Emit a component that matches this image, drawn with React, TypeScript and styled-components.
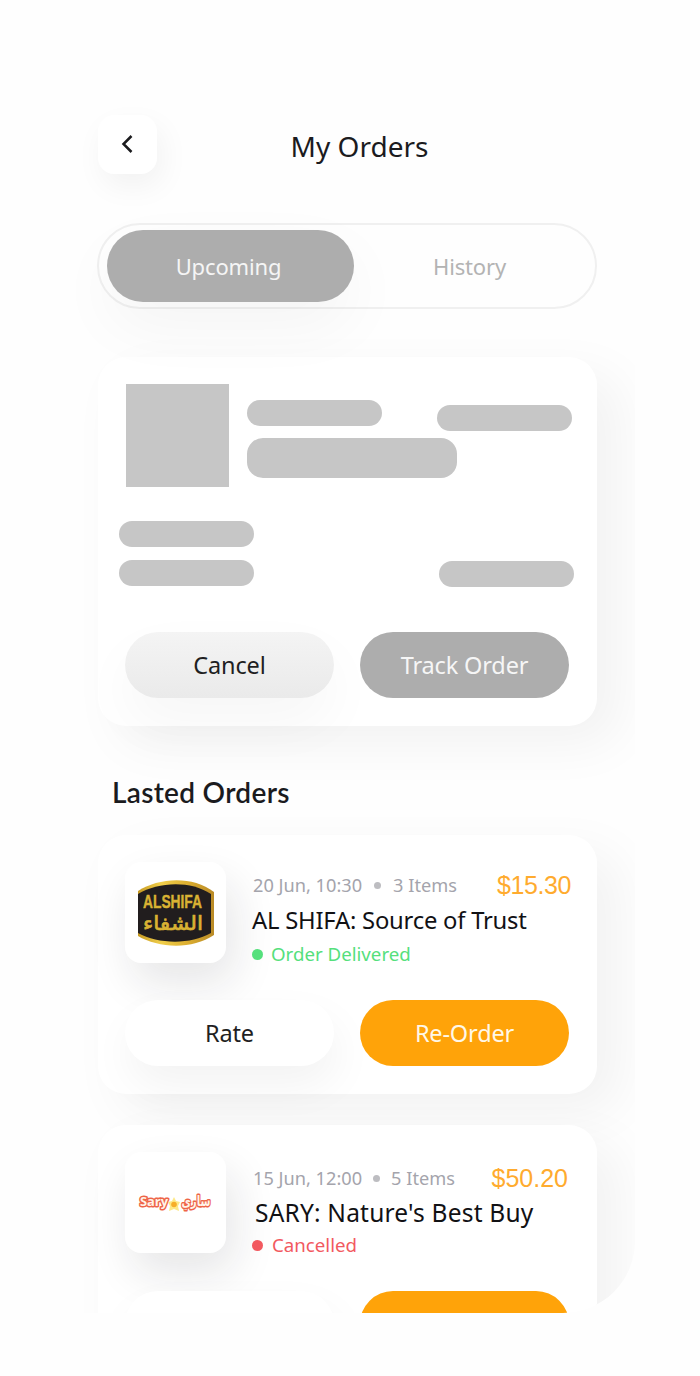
import React from "react";
import styled, { createGlobalStyle } from "styled-components";

const GlobalStyle = createGlobalStyle`
  *, *::before, *::after { box-sizing: border-box; }
  body { margin: 0; background: #fefefe; font-family: "Noto Sans", sans-serif; color: #1b1b1e; }
  button { font-family: inherit; border: 0; margin: 0; padding: 0; }
  svg { overflow: visible; }
`;

const Page = styled.div`
  height: 1376px;
  padding-left: 59px;
  background: #fefefe;
`;

const Phone = styled.main`
  width: 576px;
  height: 1313px;
  padding: 115px 38px 0 39px;
  overflow: hidden;
  border-radius: 0 0 72px 0;
  background: #fefefe;
`;

const Header = styled.header`
  display: grid;
  grid-template-columns: 59px 1fr 55px;
  align-items: center;
  height: 59px;
`;

const BackButton = styled.button`
  display: grid;
  place-items: center;
  width: 59px;
  height: 59px;
  padding: 0 2px 2px 0;
  border-radius: 16px;
  background: #fff;
  box-shadow: 5px 12px 30px rgba(0, 0, 0, 0.05);
`;

const Title = styled.h1`
  margin: 2px 0 0;
  font-size: 28px;
  line-height: 38px;
  font-weight: 400;
  text-align: center;
  padding-left: 20px;
`;

const Tabs = styled.div`
  display: flex;
  height: 86px;
  margin: 49px 0 48px -1px;
  padding: 5px 6px 4px 8px;
  border: 2px solid #f0f0f0;
  border-radius: 43px;
`;

const Tab = styled.button<{ $active?: boolean }>`
  flex: ${(p) => (p.$active ? "0 0 247px" : "1")};
  height: 72px;
  padding: 0 4px 0 0;
  border-radius: 36px;
  font-size: 22px;
  line-height: 30px;
  letter-spacing: -0.15px;
  color: ${(p) => (p.$active ? "#f5f5f5" : "#b3b3b3")};
  background: ${(p) => (p.$active ? "#adadad" : "transparent")};
  box-shadow: ${(p) => (p.$active ? "0 24px 64px rgba(0, 0, 0, 0.045)" : "none")};
`;

const Card = styled.section<{ $height: number }>`
  height: ${(p) => p.$height}px;
  padding: 27px 28px 0 27px;
  border-radius: 28px;
  background: #fff;
  box-shadow: 22px 18px 52px rgba(0, 0, 0, 0.05);
`;

const CurrentCard = styled(Card)`
  display: flex;
  flex-direction: column;
`;

const SkeletonTop = styled.div`
  display: grid;
  grid-template-columns: 103px 210px 1fr;
  column-gap: 18px;
  height: 103px;
  margin-left: 1px;
`;

const SkeletonLines = styled.div`
  display: flex;
  flex-direction: column;
  gap: 12px;
  padding-top: 16px;
`;

const SkeletonPrice = styled.div`
  margin: 21px 0 0 -38px;
`;

const SkeletonBottom = styled.div`
  display: flex;
  justify-content: space-between;
  align-items: flex-end;
  margin: 34px -5px 0 -6px;
  height: 66px;
`;

const SkeletonStack = styled.div`
  display: grid;
  gap: 13px;
  padding-bottom: 1px;
`;

const Bone = styled.div<{ $w: number; $h: number; $r: number }>`
  width: ${(p) => p.$w}px;
  height: ${(p) => p.$h}px;
  border-radius: ${(p) => p.$r}px;
  background: #c6c6c6;
`;

const Actions = styled.div<{ $top: number }>`
  display: grid;
  grid-template-columns: 209px 209px;
  justify-content: space-between;
  margin-top: ${(p) => p.$top}px;
`;

const tones = {
  muted: "color:#1f1f22;background:linear-gradient(#f4f4f4,#eaeaea);box-shadow:0 24px 56px rgba(0,0,0,.04);",
  gray: "color:#f6f6f6;background:#adadad;",
  plain: "color:#1f1f22;background:#fff;box-shadow:4px 20px 44px rgba(0,0,0,.05);",
  orange: "color:#fff8e8;background:#ffa309;",
};

const Action = styled.button<{ $tone: keyof typeof tones }>`
  height: 66px;
  padding-top: 1px;
  border-radius: 33px;
  font-size: 23.5px;
  line-height: 33px;
  letter-spacing: -0.15px;
  ${(p) => tones[p.$tone]}
`;

const SectionTitle = styled.h2`
  margin: 47px 0 24px 14px;
  font-family: Lato, sans-serif;
  font-size: 28px;
  line-height: 38px;
  font-weight: 600;
  letter-spacing: 0.3px;
`;

const OrderList = styled.div`
  display: grid;
  gap: 31px;
`;

const OrderTop = styled.div`
  display: flex;
  height: 101px;
`;

const LogoTile = styled.div`
  flex: none;
  display: grid;
  place-items: center;
  width: 101px;
  height: 101px;
  border-radius: 16px;
  background: #fff;
  box-shadow: 8px 20px 44px rgba(30, 30, 40, 0.11);
`;

const Info = styled.div<{ $shift: number }>`
  flex: 1;
  display: flex;
  flex-direction: column;
  min-width: 0;
  padding-left: 26px;
  padding-top: ${(p) => 8 + p.$shift}px;
`;

const MetaRow = styled.div`
  display: flex;
  justify-content: space-between;
  align-items: center;
  height: 32px;
  white-space: nowrap;
`;

const Meta = styled.div<{ $gap: number }>`
  display: flex;
  align-items: center;
  gap: ${(p) => p.$gap}px;
  padding-left: 1px;
  font-size: 18.2px;
  color: #a4a4ac;
`;

const Dot = styled.span<{ $size: number }>`
  width: ${(p) => p.$size}px;
  height: ${(p) => p.$size}px;
  border-radius: 50%;
  background: currentColor;
`;

const MetaDot = styled(Dot)`
  background: #bdbdc1;
`;

const Price = styled.div<{ $inset: number; $tracking: number }>`
  margin-right: ${(p) => p.$inset}px;
  padding-top: 1px;
  font-family: "Liberation Sans", Arial, sans-serif;
  font-size: 25px;
  letter-spacing: ${(p) => p.$tracking}px;
  color: #ffab2e;
`;

const OrderName = styled.h3<{ $indent: number; $size: number; $tracking: number }>`
  margin: 3px 0 0 ${(p) => p.$indent}px;
  font-size: ${(p) => p.$size}px;
  line-height: 34px;
  font-weight: 400;
  letter-spacing: ${(p) => p.$tracking}px;
  white-space: nowrap;
  color: #111114;
`;

const Status = styled.div<{ $color: string; $gap: number; $up: number }>`
  display: flex;
  align-items: center;
  gap: ${(p) => p.$gap}px;
  margin-top: ${(p) => 3 - p.$up}px;
  font-size: 18.7px;
  line-height: 28px;
  color: ${(p) => p.$color};
`;

const AlShifaLogo = () => (
  <svg width="76" height="66" viewBox="0 0 76 66">
    <defs>
      <linearGradient id="gold" x1="0" x2="1">
        <stop offset="0" stopColor="#c79a22" />
        <stop offset="0.3" stopColor="#f1cf4b" />
        <stop offset="0.65" stopColor="#dcae30" />
        <stop offset="1" stopColor="#b98a26" />
      </linearGradient>
    </defs>
    <path d="M0 11C20-2 54-5 76 12V55C54 70 20 68 0 56Z" fill="url(#gold)" />
    <path d="M0 14C20 2 52 0 73 14V53C52 65 20 64 0 53Z" fill="#211d1e" />
    <text x="5" y="28" textLength="59" lengthAdjust="spacingAndGlyphs" fill="#d9b233" stroke="#d9b233" strokeWidth="0.4" fontFamily="Liberation Sans, sans-serif" fontWeight="700" fontSize="18">ALSHIFA</text>
    <text x="35" y="50" textAnchor="middle" textLength="60" lengthAdjust="spacingAndGlyphs" fill="#d9b233" stroke="#d9b233" strokeWidth="0.7" fontFamily="DejaVu Sans, sans-serif" fontSize="20">الشفاء</text>
  </svg>
);

const SaryLogo = () => (
  <svg width="74" height="22" viewBox="0 0 74 22">
    <g fill="#fff3e8" stroke="#ee6548" strokeWidth="3" paintOrder="stroke" strokeLinejoin="round" fontWeight="700">
      <text x="1" y="14" textLength="28" lengthAdjust="spacingAndGlyphs" fontFamily="Open Sans, sans-serif" fontSize="13">Sary</text>
      <text x="57" y="14" textAnchor="middle" textLength="29" lengthAdjust="spacingAndGlyphs" fontFamily="DejaVu Sans, sans-serif" fontSize="14">ساري</text>
    </g>
    <path d="M35 5l2 4 4 1-2 4 1 5-5-2-5 2 1-5-2-4 4-1Z" fill="#fde987" />
    <circle cx="35" cy="12.5" r="2.8" fill="#f6ae29" />
  </svg>
);

interface Order {
  date: string;
  items: string;
  price: string;
  priceInset: number;
  priceTracking: number;
  name: string;
  nameSize: number;
  tracking: number;
  status: string;
  color: string;
  late: boolean;
  logo: React.ReactNode;
}

const orders: Order[] = [
  { date: "20 Jun, 10:30", items: "3 Items", price: "$15.30", priceInset: -2, priceTracking: -0.4, name: "AL SHIFA: Source of Trust", nameSize: 23.8, tracking: -0.22, status: "Order Delivered", color: "#55e07c", late: false, logo: <AlShifaLogo /> },
  { date: "15 Jun, 12:00", items: "5 Items", price: "$50.20", priceInset: 1, priceTracking: 0, name: "SARY: Nature's Best Buy", nameSize: 24.5, tracking: 0.2, status: "Cancelled", color: "#f2595f", late: true, logo: <SaryLogo /> },
];

const OrderCard = ({ order }: { order: Order }) => (
  <Card $height={259}>
    <OrderTop>
      <LogoTile>{order.logo}</LogoTile>
      <Info $shift={order.late ? 3 : 0}>
        <MetaRow>
          <Meta $gap={order.late ? 11 : 12}>
            <span>{order.date}</span>
            <MetaDot $size={7} />
            <span>{order.items}</span>
          </Meta>
          <Price $inset={order.priceInset} $tracking={order.priceTracking}>{order.price}</Price>
        </MetaRow>
        <OrderName $indent={order.late ? 3 : 0} $size={order.nameSize} $tracking={order.tracking}>{order.name}</OrderName>
        <Status $color={order.color} $gap={order.late ? 9 : 8} $up={order.late ? 2 : 0}>
          <Dot $size={11} />
          <span>{order.status}</span>
        </Status>
      </Info>
    </OrderTop>
    <Actions $top={order.late ? 38 : 37}>
      <Action $tone="plain">Rate</Action>
      <Action $tone="orange">Re-Order</Action>
    </Actions>
  </Card>
);

export default function App() {
  return (
    <Page>
      <GlobalStyle />
      <Phone>
        <Header>
          <BackButton aria-label="Back">
            <svg width="14" height="20" viewBox="0 0 14 20" fill="none" stroke="#1b1b1e" strokeWidth="2.5">
              <path d="M11.5 2 3.5 10l8 8" />
            </svg>
          </BackButton>
          <Title>My Orders</Title>
        </Header>
        <Tabs>
          <Tab $active>Upcoming</Tab>
          <Tab>History</Tab>
        </Tabs>
        <CurrentCard $height={369}>
          <SkeletonTop>
            <Bone $w={103} $h={103} $r={0} />
            <SkeletonLines>
              <Bone $w={135} $h={26} $r={13} />
              <Bone $w={210} $h={40} $r={16} />
            </SkeletonLines>
            <SkeletonPrice>
              <Bone $w={135} $h={26} $r={13} />
            </SkeletonPrice>
          </SkeletonTop>
          <SkeletonBottom>
            <SkeletonStack>
              <Bone $w={135} $h={26} $r={13} />
              <Bone $w={135} $h={26} $r={13} />
            </SkeletonStack>
            <Bone $w={135} $h={26} $r={13} />
          </SkeletonBottom>
          <Actions $top={45}>
            <Action $tone="muted">Cancel</Action>
            <Action $tone="gray">Track Order</Action>
          </Actions>
        </CurrentCard>
        <SectionTitle>Lasted Orders</SectionTitle>
        <OrderList>
          {orders.map((order) => (
            <OrderCard key={order.name} order={order} />
          ))}
        </OrderList>
      </Phone>
    </Page>
  );
}
